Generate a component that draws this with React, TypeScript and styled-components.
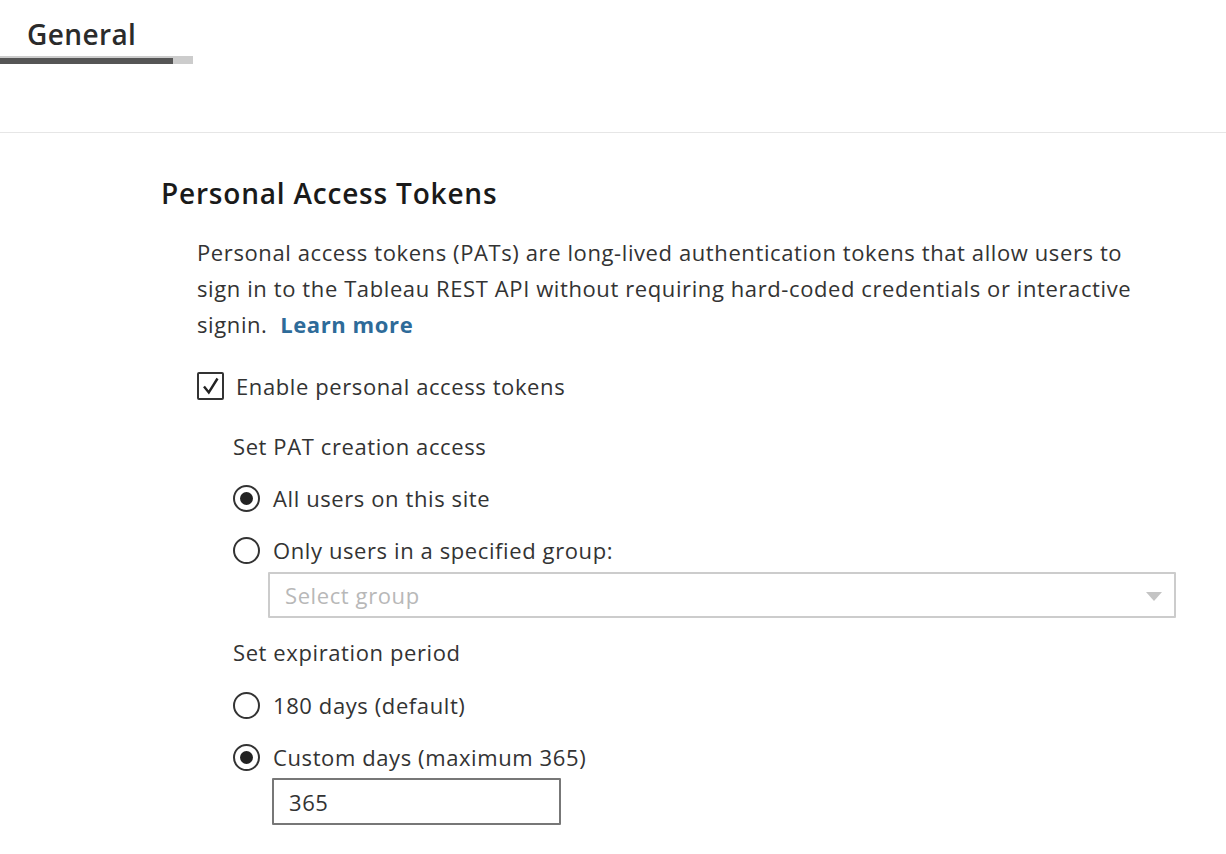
import React from "react";
import styled, { createGlobalStyle, css } from "styled-components";

const FONT = `"Open Sans", "Liberation Sans", sans-serif`;

const GlobalStyle = createGlobalStyle`
    html, body {
        margin: 0;
        padding: 0;
        background: #ffffff;
    }
    body {
        font-family: ${FONT};
        color: #333333;
        letter-spacing: 0.6px;
    }
`;

export default function App() {
    return (
        <>
            <GlobalStyle />
            <TabBar>
                <Tab>
                    <TabLabel>General</TabLabel>
                    <TabIndicator>
                        <TabIndicatorFill />
                    </TabIndicator>
                </Tab>
            </TabBar>
            <Content>
                <Heading>Personal Access Tokens</Heading>
                <Section>
                    <Description>
                        Personal access tokens (PATs) are long-lived authentication tokens that allow users to
                        <br />
                        sign in to the Tableau REST API without requiring hard-coded credentials or interactive
                        <br />
                        signin.&nbsp; <LearnMore href="#">Learn more</LearnMore>
                    </Description>
                    <CheckRow>
                        <CheckBox>
                            <svg width="20" height="20" viewBox="0 0 20 20">
                                <path d="M3 10.5 L7.8 16.5 L16.5 2.5" fill="none" stroke="#222" strokeWidth="2.4" />
                            </svg>
                        </CheckBox>
                        <OptionLabel>Enable personal access tokens</OptionLabel>
                    </CheckRow>
                    <Group>
                        <GroupTitle>Set PAT creation access</GroupTitle>
                        <RadioRow>
                            <Radio $checked />
                            <OptionLabel>All users on this site</OptionLabel>
                        </RadioRow>
                        <RadioRow>
                            <Radio />
                            <OptionLabel>Only users in a specified group:</OptionLabel>
                        </RadioRow>
                        <SelectBox>
                            <Placeholder>Select group</Placeholder>
                            <Caret />
                        </SelectBox>
                        <GroupTitle $spaced>Set expiration period</GroupTitle>
                        <RadioRow $gap={17}>
                            <Radio />
                            <OptionLabel>180 days (default)</OptionLabel>
                        </RadioRow>
                        <RadioRow>
                            <Radio $checked />
                            <OptionLabel>Custom days (maximum 365)</OptionLabel>
                        </RadioRow>
                        <DaysInput>365</DaysInput>
                    </Group>
                </Section>
            </Content>
        </>
    );
}

const TabBar = styled.div`
    height: 132px;
    border-bottom: 1px solid #e6e6e6;
`;

const Tab = styled.div`
    width: 193px;
    padding-top: 14px;
`;

const TabLabel = styled.div`
    padding-left: 27px;
    font-family: ${FONT};
    font-size: 28px;
    font-weight: 600;
    line-height: 40px;
    letter-spacing: 0.4px;
    color: #2b2b2b;
`;

const TabIndicator = styled.div`
    margin-top: 2px;
    height: 8px;
    background: #cccccc;
    display: flex;
    align-items: flex-end;
`;

const TabIndicatorFill = styled.div`
    width: 173px;
    height: 6px;
    background: #555555;
`;

const Content = styled.div`
    padding: 40px 0 0 161px;
`;

const Heading = styled.h2`
    margin: 0;
    font-family: ${FONT};
    font-size: 28px;
    font-weight: 600;
    line-height: 40px;
    letter-spacing: 0.8px;
    color: #1a1a1a;
`;

const Section = styled.div`
    padding-left: 36px;
    padding-top: 21px;
`;

const Description = styled.p`
    margin: 0;
    white-space: nowrap;
    font-size: 22px;
    line-height: 36px;
    color: #333333;
`;

const LearnMore = styled.a`
    color: #2e6b99;
    font-weight: 700;
    text-decoration: none;
`;

const rowCss = css`
    display: flex;
    align-items: center;
    height: 36px;
`;

const CheckRow = styled.div`
    ${rowCss}
    margin-top: 26px;
    gap: 12px;
`;

const CheckBox = styled.span`
    box-sizing: border-box;
    width: 27px;
    height: 28px;
    border: 2px solid #333333;
    border-radius: 2px;
    display: flex;
    align-items: center;
    justify-content: center;
`;

const OptionLabel = styled.span`
    font-size: 22px;
    color: #333333;
`;

const Group = styled.div`
    padding-left: 36px;
    padding-top: 14px;
`;

const GroupTitle = styled.div<{ $spaced?: boolean }>`
    ${rowCss}
    margin-top: ${(p) => (p.$spaced ? "16px" : "10px")};
    font-size: 22px;
    color: #333333;
`;

const RadioRow = styled.div<{ $gap?: number }>`
    ${rowCss}
    margin-top: ${(p) => p.$gap ?? 16}px;
    gap: 13px;
`;

const Radio = styled.span<{ $checked?: boolean }>`
    box-sizing: border-box;
    width: 27px;
    height: 27px;
    border: 2px solid #333333;
    border-radius: 50%;
    display: flex;
    align-items: center;
    justify-content: center;
    &::after {
        content: "";
        width: 13px;
        height: 13px;
        border-radius: 50%;
        background: #222222;
        display: ${(p) => (p.$checked ? "block" : "none")};
    }
`;

const SelectBox = styled.div`
    box-sizing: border-box;
    margin: 4px 0 0 35px;
    width: 908px;
    height: 46px;
    border: 2px solid #cccccc;
    border-radius: 1px;
    display: flex;
    align-items: center;
    justify-content: space-between;
    padding: 0 12px 0 15px;
`;

const Placeholder = styled.span`
    font-size: 22px;
    color: #b8b8b8;
`;

const Caret = styled.span`
    width: 0;
    height: 0;
    border-left: 8px solid transparent;
    border-right: 8px solid transparent;
    border-top: 9px solid #c4c4c4;
    margin-top: 2px;
`;

const DaysInput = styled.div`
    box-sizing: border-box;
    margin: 3px 0 0 39px;
    width: 289px;
    height: 47px;
    border: 2px solid #777777;
    border-radius: 1px;
    display: flex;
    align-items: center;
    padding-left: 15px;
    font-size: 22px;
    color: #333333;
`;
